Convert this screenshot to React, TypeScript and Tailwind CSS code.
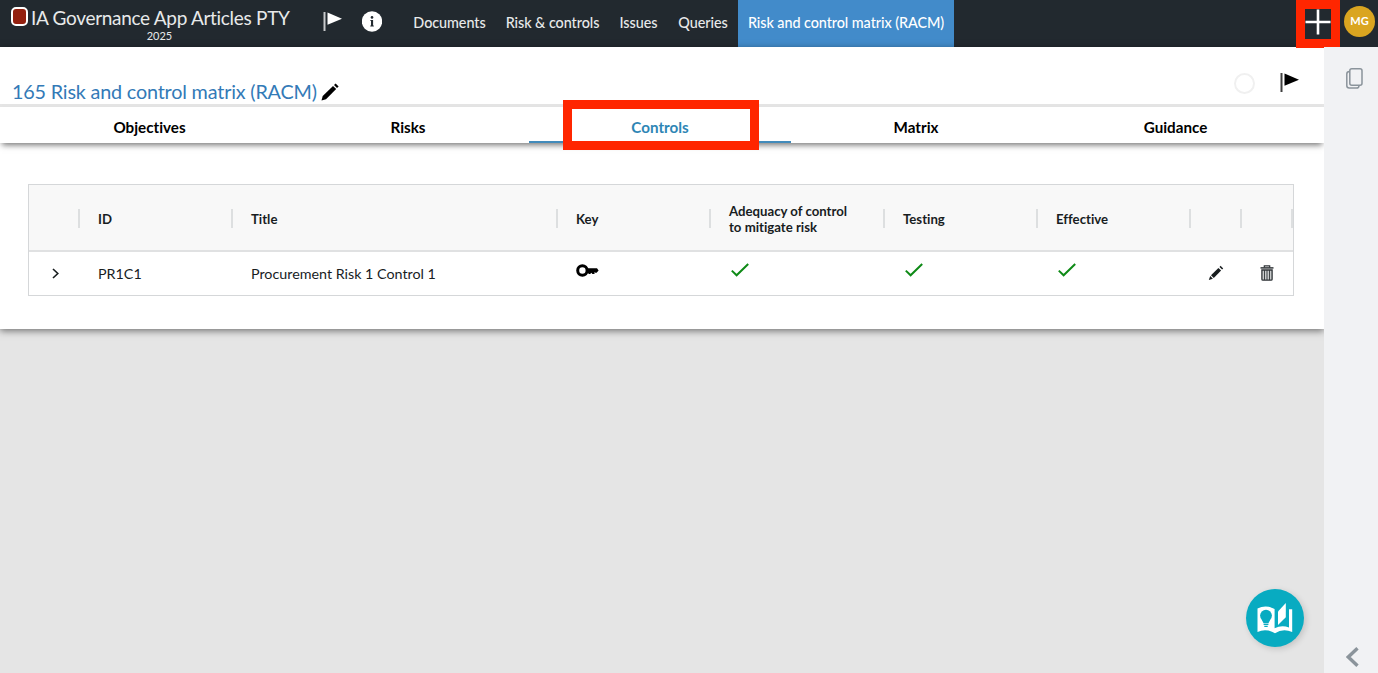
import type { ReactNode } from "react";
import clsx from "clsx";

const NAV = [
  { label: "Documents", width: "w-[93px]" },
  { label: "Risk & controls", width: "w-[113px]" },
  { label: "Issues", width: "w-[59px]" },
  { label: "Queries", width: "w-[70px]" },
  { label: "Risk and control matrix (RACM)", width: "w-[216px]", active: true },
];

const TABS = [
  { label: "Objectives", width: "w-[275px]" },
  { label: "Risks", width: "w-[242px]" },
  { label: "Controls", width: "w-[262px]", active: true },
  { label: "Matrix", width: "w-[250px]" },
  { label: "Guidance", width: "w-[269px]" },
];

const COLUMNS = ["", "ID", "Title", "Key", "Adequacy of control to mitigate risk", "Testing", "Effective", "", ""];

const GRID = "grid grid-cols-[51px_153px_325px_153px_174px_153px_153px_51px_51px]";

function Flag({ className }: { className?: string }) {
  return (
    <svg width="19" height="19" viewBox="0 0 19 19" className={className}>
      <path d="M1.5 0v19" stroke="currentColor" strokeWidth="2" opacity="0.75" />
      <path d="M4.5 0.5L19 6.7L4.5 12.8z" fill="currentColor" />
    </svg>
  );
}

function InfoIcon() {
  return (
    <svg width="20" height="21" viewBox="0 0 20 21">
      <circle cx="10" cy="10.5" r="10.2" fill="#fff" />
      <circle cx="10" cy="6.4" r="1.3" fill="#22292f" />
      <path d="M8.4 9h2.7v5.6h0.7v1H8.3v-1H9V10H8.4z" fill="#22292f" />
    </svg>
  );
}

function TitlePencil() {
  return (
    <svg width="18" height="18" viewBox="0 0 18 18">
      <path d="M0.5 17.5L1.7 13L12 2.9L15.2 6L5 16.2z" />
      <path d="M13 2L14.6 0.5L17.6 3.4L16 5z" />
    </svg>
  );
}

function RowPencil() {
  return (
    <svg width="16" height="16" viewBox="0 0 16 16" fill="#181d1f">
      <path d="M3 10.2L10.4 2.9L13.1 5.5L5.8 12.9z" />
      <path d="M11.5 1.9L12.6 0.8L15.2 3.4L14.1 4.5z" />
      <path d="M2.2 11.1L4.9 13.8L0.8 15.1z" />
    </svg>
  );
}

function Trash() {
  return (
    <svg width="14" height="16" viewBox="0 0 14 16" fill="none" stroke="#303538">
      <path d="M0.5 2.9h13" strokeWidth="1.5" />
      <path d="M4.3 2.5V0.8h5.4v1.7" strokeWidth="1.2" />
      <path d="M1.9 5h10.2v9.2q0 1-1 1H2.9q-1 0-1-1z" strokeWidth="1.3" fill="#c9cbcc" />
      <path d="M4.5 5v10M7 5v10M9.5 5v10" strokeWidth="0.9" />
    </svg>
  );
}

function KeyIcon() {
  return (
    <svg width="23" height="13" viewBox="0 0 23 13">
      <circle cx="6.4" cy="6.5" r="4.7" fill="none" stroke="#000" strokeWidth="3" />
      <path d="M11 4.2H21L22.6 6.4L20.6 8.8H19.4L18.5 8V10H16.4L15.3 8.8L14.2 10H12.8L12 9H10.6z" />
    </svg>
  );
}

function Check() {
  return (
    <svg width="18" height="14" viewBox="0 0 18 14" fill="none" stroke="#0e8a16" strokeWidth="2">
      <path d="M0.8 7.6L5.6 12.3L17.2 1" />
    </svg>
  );
}

function PagesIcon() {
  return (
    <svg width="17" height="21" viewBox="0 0 17 21" fill="none" stroke="#8b949b" strokeWidth="1.5">
      <rect x="3.8" y="0.8" width="12.2" height="16.4" rx="2" />
      <path d="M3.6 3.5Q0.8 3.5 0.8 6V17.5Q0.8 20 3.2 20H10.5Q13 20 13 17.4" />
    </svg>
  );
}

function BookIcon() {
  return (
    <svg width="36" height="32" viewBox="0 0 36 32">
      <path d="M0.5 6.5Q9 2.5 17.6 7V26.2Q25 22.5 32 25.6V7.2H35.2V30Q26 26 18 31.2Q9 26 0.5 30z" fill="#fff" />
      <path d="M21 9.6L28.8 0.9V15.3L21 23z" fill="#fff" />
      <circle cx="9" cy="13.6" r="5.9" fill="#08abc1" />
      <path d="M4.6 17.4h8.8L11.4 21.2H6.6z" fill="#08abc1" />
      <path d="M6.6 22.4h4.8M7.3 24.4h3.4" stroke="#08abc1" strokeWidth="1.1" />
    </svg>
  );
}

function Cell({ children, className }: { children?: ReactNode; className?: string }) {
  return <div className={clsx("flex items-center", className ?? "pl-[18px]")}>{children}</div>;
}

function TopBar() {
  return (
    <header className="flex h-[47px] shrink-0 bg-[#22292f] text-[#e8e9ea]">
      <div className="flex w-[323px] flex-col pl-[11px]">
        <div className="flex h-[29px] items-start">
          <span className="mt-[7px] h-[19px] w-[17px] rounded-[5px] border-2 border-white bg-[#93200f]" />
          <span className="ml-[3px] pt-[7px] text-[19px] leading-[21px] tracking-[-0.3px] whitespace-nowrap">
            IA Governance App Articles PTY
          </span>
        </div>
        <span className="w-[297px] text-center text-[11px] leading-[14px]">2025</span>
      </div>
      <Flag className="mt-[12px] text-white" />
      <div className="mt-[11px] ml-[20px] w-[41px]">
        <InfoIcon />
      </div>
      <nav className="flex">
        {NAV.map((item) => (
          <a
            key={item.label}
            className={clsx(
              "flex items-center justify-center pb-px text-[14.4px] font-medium tracking-[-0.07px] whitespace-nowrap",
              item.width,
              item.active && "bg-[#428bca] text-white"
            )}
          >
            {item.label}
          </a>
        ))}
      </nav>
      <button type="button" className="relative z-10 ml-auto flex h-[48px] w-[44px] items-center justify-center border-[9px] border-[#ff2600] bg-[#22292f]">
        <svg width="26" height="26" viewBox="0 0 26 26" className="mb-[4px] shrink-0">
          <path d="M13 0.5v25M0.5 13h25" stroke="#fff" strokeWidth="2.6" />
        </svg>
      </button>
      <span className="mt-[6px] mr-[3px] ml-[4px] flex h-[31px] w-[31px] items-center justify-center rounded-full bg-[#daa520] text-[11px] font-bold text-white">
        MG
      </span>
    </header>
  );
}

function ControlsTable() {
  return (
    <div className="mt-[41px] ml-[28px] w-[1266px] border border-[#d5d7d9] text-[#181d1f]">
      <div className={clsx(GRID, "h-[67px] border-b-2 border-[#e0e1e2] bg-[#f8f8f8] pt-px")}>
        {COLUMNS.map((name, i) => (
          <div key={i} className="flex items-center justify-between pl-[18px]">
            <span className="w-[124px] pt-px text-[13.2px] leading-4 font-bold">{name}</span>
            <span className="h-[19px] w-[2px] shrink-0 bg-[#dddfe0]" />
          </div>
        ))}
      </div>
      <div className={clsx(GRID, "h-[43px] text-[14.3px]")}>
        <div className="flex items-center pl-[23px]">
          <svg width="7" height="11" viewBox="0 0 7 11" fill="none" stroke="#181d1f" strokeWidth="1.6">
            <path d="M1 1L5.8 5.5L1 10" />
          </svg>
        </div>
        <Cell>PR1C1</Cell>
        <Cell>Procurement Risk 1 Control 1</Cell>
        <Cell className="pb-[7px] pl-[18px]">
          <KeyIcon />
        </Cell>
        <Cell className="pb-[7px] pl-[20px]">
          <Check />
        </Cell>
        <Cell className="pb-[7px] pl-[20px]">
          <Check />
        </Cell>
        <Cell className="pb-[7px] pl-[20px]">
          <Check />
        </Cell>
        <Cell className="pb-[2px] pl-[17px]">
          <RowPencil />
        </Cell>
        <Cell className="pb-[2px] pl-[18px]">
          <Trash />
        </Cell>
      </div>
    </div>
  );
}

export default function App() {
  return (
    <div className="flex h-[673px] w-[1378px] flex-col overflow-hidden bg-[#e5e5e5] font-['Lato',sans-serif] antialiased [font-variant-ligatures:none]">
      <TopBar />
      <div className="flex min-h-0 flex-1">
        <main className="flex w-[1324px] flex-col">
          <section className="h-[282px] bg-white shadow-[0_2px_7px_rgba(0,0,0,0.5)]">
            <div className="flex h-[60px] items-end border-b-[3px] border-[#e5e5e5] pl-[12px]">
              <h1 className="mb-px w-[309px] text-[19.8px] leading-6 tracking-[-0.18px] whitespace-nowrap text-[#337ab7]">
                165 Risk and control matrix (RACM)
              </h1>
              <div className="mb-[3px]">
                <TitlePencil />
              </div>
              <span className="mb-[10px] ml-auto h-[21px] w-[21px] rounded-full border-2 border-[#f0f0f0]" />
              <Flag className="mr-[25px] mb-[12px] ml-[25px]" />
            </div>
            <div className="flex h-[36px] bg-white px-[12px] shadow-[0_4px_6px_-2px_rgba(0,0,0,0.55)]">
              {TABS.map((tab) => (
                <div
                  key={tab.label}
                  className={clsx(
                    "relative flex items-center justify-center pt-1 text-[15.2px] font-bold",
                    tab.width,
                    tab.active && "border-b-2 border-[#428bbb] pt-1.5 text-[#2e86b5]"
                  )}
                >
                  {tab.label}
                  {tab.active && (
                    <span className="absolute top-[-7px] left-[34px] h-[50px] w-[196px] border-[9px] border-[#ff2600]" />
                  )}
                </div>
              ))}
            </div>
            <ControlsTable />
          </section>
          <button
            type="button"
            className="mt-auto mr-[20px] mb-[26px] ml-auto flex h-[58px] w-[58px] items-center justify-center rounded-full bg-[#08abc1] shadow-[2px_2px_6px_rgba(0,0,0,0.15)]"
          >
            <BookIcon />
          </button>
        </main>
        <aside className="z-10 flex w-[54px] flex-col justify-between bg-[#f1f2f4] pt-[21px] pb-[6px] pl-[22px]">
          <PagesIcon />
          <svg width="13" height="20" viewBox="0 0 13 20" fill="none" stroke="#8b949b" strokeWidth="3.4">
            <path d="M11.5 1.3L2.3 10L11.5 18.7" />
          </svg>
        </aside>
      </div>
    </div>
  );
}
